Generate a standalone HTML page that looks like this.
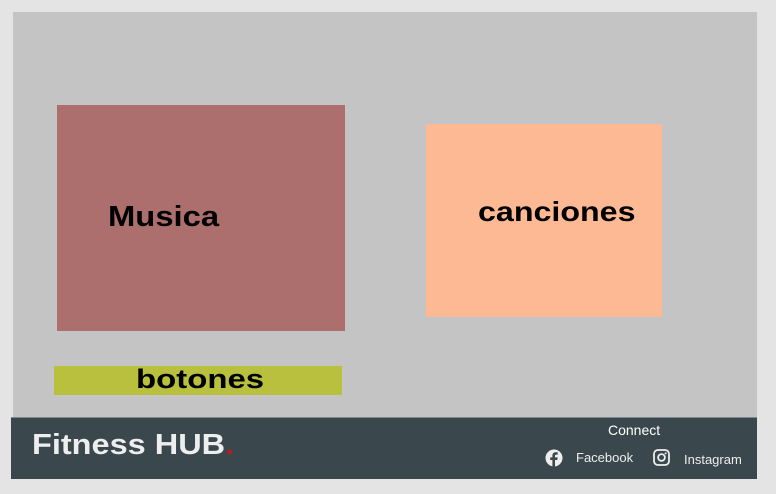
<!DOCTYPE html>
<html><head><style>
body{margin:0;width:776px;height:494px;background:#e4e4e4;position:relative;overflow:hidden;font-family:"Liberation Sans",sans-serif}
.a{position:absolute}
.t{font-weight:bold;color:#000;position:absolute;transform-origin:0 50%}
</style></head><body>
<div class="a" style="left:13px;top:12px;width:744px;height:406px;background:#c4c4c4"></div>
<div class="a" style="left:57px;top:105px;width:288px;height:226px;background:#ad6f6d"></div>
<div class="t" style="left:108px;top:201px;font-size:29px;transform:scaleX(1.13)">Musica</div>
<div class="a" style="left:426px;top:124px;width:236px;height:193px;background:#fdb994"></div>
<div class="t" style="left:478px;top:196px;font-size:28px;transform:scaleX(1.15)">canciones</div>
<div class="a" style="left:54px;top:366px;width:288px;height:29px;background:#b9c03e"></div>
<div class="t" style="left:136px;top:364px;font-size:27px;transform:scaleX(1.22)">botones</div>
<div class="a" style="left:11px;top:417px;width:746px;height:61px;background:#3a484e;border-top:1px solid #7c8a8e"></div>
<div class="a" style="left:32px;top:429px;font-size:29px;font-weight:bold;color:#eee;transform:scaleX(1.12);transform-origin:0 50%">Fitness HUB<span style="color:#b02020">.</span></div>
<div class="a" style="left:608px;top:422px;font-size:14px;color:#fff">Connect</div>
<svg class="a" style="left:545px;top:449px" width="18" height="18" viewBox="0 0 18 18"><circle cx="9" cy="9" r="8.5" fill="#eee"/><path d="M10 18V11h2.3l.4-2.6H10V6.9c0-.8.3-1.3 1.3-1.3h1.4V3.3c-.3 0-1.1-.1-2-.1-2 0-3.3 1.2-3.3 3.4v1.8H5.2V11h2.2v7z" fill="#3a484e"/></svg>
<div class="a" style="left:576px;top:450px;font-size:13px;color:#eee">Facebook</div>
<svg class="a" style="left:653px;top:449px" width="17" height="17" viewBox="0 0 17 17"><rect x="1" y="1" width="15" height="15" rx="4" fill="none" stroke="#eee" stroke-width="1.8"/><circle cx="8.5" cy="8.5" r="3.4" fill="none" stroke="#eee" stroke-width="1.8"/><circle cx="12.6" cy="4.4" r="1" fill="#eee"/></svg>
<div class="a" style="left:684px;top:452px;font-size:13px;color:#eee">Instagram</div>
</body></html>
